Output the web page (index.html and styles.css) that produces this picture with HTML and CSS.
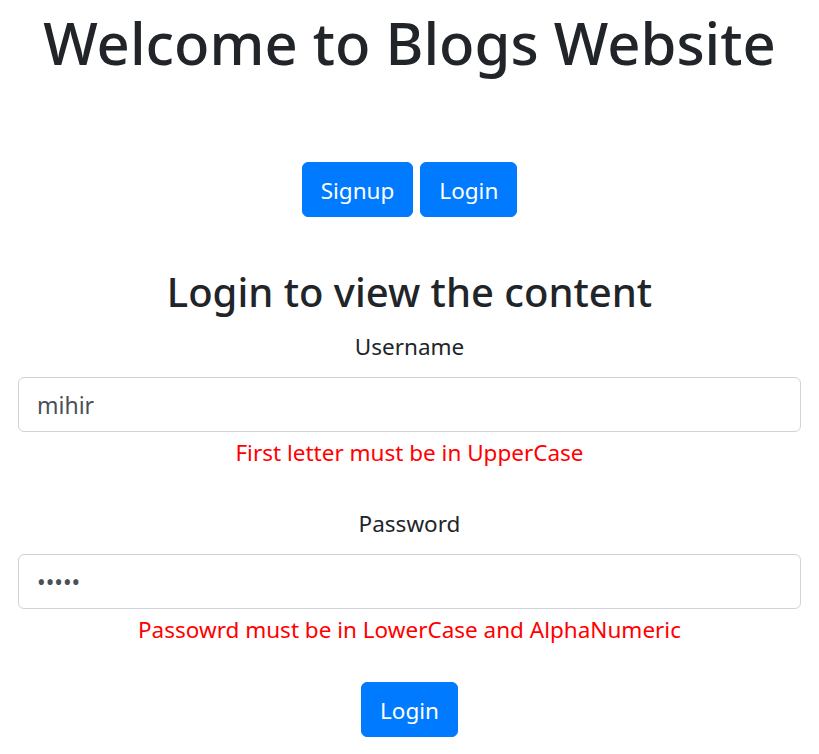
FILE: index.html
```html
<!DOCTYPE html>
<html lang="en">
<head>
<meta charset="utf-8">
<title>Blogs Website</title>
<link rel="stylesheet" href="styles.css">
</head>
<body>
<div class="page">
  <h1 class="title">Welcome to Blogs Website</h1>
  <div class="nav">
    <button class="btn">Signup</button>
    <button class="btn">Login</button>
  </div>
  <h2 class="subtitle">Login to view the content</h2>
  <form class="form">
    <label class="label" for="username">Username</label>
    <input class="input" id="username" type="text" value="mihir">
    <p class="error">First letter must be in UpperCase</p>
    <label class="label" for="password">Password</label>
    <input class="input" id="password" type="password" value="mihir">
    <p class="error">Passowrd must be in LowerCase and AlphaNumeric</p>
    <div class="actions"><button class="btn" type="button">Login</button></div>
  </form>
</div>
</body>
</html>
```
FILE: styles.css
```css
html, body {
  margin: 0;
  padding: 0;
  background: #ffffff;
}
body {
  font-family: "Noto Sans", "Open Sans", sans-serif;
  font-size: 22.5px;
  color: #212529;
}
.page {
  padding: 0 18px;
  text-align: center;
}
.title {
  margin: 0;
  padding-top: 2px;
  font-size: 58px;
  font-weight: 500;
  line-height: 82px;
}
.nav {
  margin-top: 78px;
  display: flex;
  justify-content: center;
  gap: 7px;
}
.btn {
  font-family: inherit;
  font-size: 22.5px;
  line-height: 36px;
  color: #ffffff;
  background: #007bff;
  border: 1px solid #007bff;
  border-radius: 6px;
  padding: 10px 18px 8px;
  height: 55px;
  cursor: pointer;
}
.subtitle {
  margin: 40px 0 0;
  font-size: 40px;
  font-weight: 500;
  line-height: 70px;
}
.form {
  display: flex;
  flex-direction: column;
  align-items: stretch;
}
.label {
  display: block;
  line-height: 36px;
  margin-top: 2px;
  margin-bottom: 12px;
}
.input {
  box-sizing: border-box;
  height: 55px;
  width: 100%;
  font-family: inherit;
  font-size: 23px;
  color: #495057;
  padding: 0 18px;
  border: 1px solid #ced4da;
  border-radius: 6px;
  outline: none;
}
.error {
  margin: 3px 0 0;
  color: #ff0000;
  line-height: 36px;
  height: 69px;
}
.actions {
  margin-top: 1px;
  display: flex;
  justify-content: center;
}
```
